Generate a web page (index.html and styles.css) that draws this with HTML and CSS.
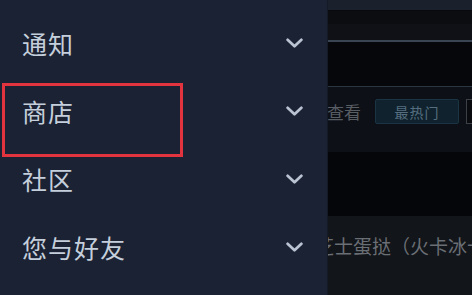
FILE: index.html
```html
<!DOCTYPE html>
<html lang="zh">
<head>
<meta charset="utf-8">
<link rel="stylesheet" href="styles.css">
</head>
<body>
<div class="screen">
  <nav class="drawer">
    <div class="item"><span class="label">通知</span><svg class="chev" viewBox="0 0 16 9"><path d="M1.5 1.5 L8 7.5 L14.5 1.5"/></svg></div>
    <div class="item"><span class="label">商店</span><svg class="chev" viewBox="0 0 16 9"><path d="M1.5 1.5 L8 7.5 L14.5 1.5"/></svg></div>
    <div class="item"><span class="label">社区</span><svg class="chev" viewBox="0 0 16 9"><path d="M1.5 1.5 L8 7.5 L14.5 1.5"/></svg></div>
    <div class="item"><span class="label">您与好友</span><svg class="chev" viewBox="0 0 16 9"><path d="M1.5 1.5 L8 7.5 L14.5 1.5"/></svg></div>
    <div class="highlight"></div>
  </nav>
  <main class="page">
    <div class="topbar"></div>
    <div class="sep-dark"></div>
    <div class="band-a"></div>
    <div class="band-b"></div>
    <div class="sep-light"></div>
    <div class="hero"></div>
    <div class="sep-mid"></div>
    <div class="filters">
      <span class="view">查看</span>
      <span class="btn">最热门</span>
      <span class="btn2"></span>
    </div>
    <div class="shade"></div>
    <div class="listing">
      <span class="title">芝士蛋挞（火卡冰卡</span>
    </div>
  </main>
</div>
</body>
</html>
```

FILE: styles.css
```css
* { box-sizing: border-box; }
html, body { margin: 0; padding: 0; }
body {
  width: 472px;
  height: 295px;
  overflow: hidden;
  background: #0d1016;
  font-family: "Noto Sans CJK SC", "Noto Sans", sans-serif;
}
.screen {
  display: flex;
  width: 472px;
  height: 295px;
}
.drawer {
  position: relative;
  width: 328px;
  flex: none;
  background: #1b2233;
  padding-top: 9px;
  border-right: 1px solid #141a26;
}
.item {
  height: 68px;
  display: flex;
  align-items: center;
  justify-content: space-between;
  padding-left: 22px;
  padding-right: 24px;
}
.label {
  font-size: 25px;
  color: #c5cfdc;
  letter-spacing: 1px;
  line-height: 1;
}
.chev {
  width: 17px;
  height: 10px;
  fill: none;
  stroke: #b9c3d1;
  stroke-width: 2.6;
  stroke-linecap: round;
  stroke-linejoin: round;
}
.highlight {
  position: absolute;
  left: 2px;
  top: 83px;
  width: 181px;
  height: 74px;
  border: 3px solid #e1343e;
}
.page {
  flex: 1;
  display: flex;
  flex-direction: column;
  overflow: hidden;
  background: #121519;
}
.topbar { height: 10px; background: #1a202c; }
.sep-dark { height: 1px; background: #08090c; }
.band-a { height: 13px; background: #0b0d11; }
.band-b { height: 16px; background: #0f1116; }
.sep-light { height: 2px; background: #3a4553; }
.hero { height: 44px; background: #06070a; }
.sep-mid { height: 1px; background: #2c3641; }
.filters {
  height: 65px;
  background: #0d1016;
  display: flex;
  align-items: center;
  gap: 14px;
  padding-bottom: 16px;
  white-space: nowrap;
}
.view {
  font-size: 17px;
  color: #585d64;
  margin-left: -1px;
}
.btn {
  flex: none;
  width: 84px;
  height: 25px;
  border: 1px solid #1b3444;
  border-radius: 2px;
  background: #10222d;
  color: #566f80;
  font-size: 14px;
  display: flex;
  align-items: center;
  justify-content: center;
  letter-spacing: 1px;
}
.btn2 {
  flex: none;
  width: 30px;
  height: 25px;
  border: 1px solid #3c4148;
  background: #0a0b0e;
  margin-left: -7px;
}
.shade { height: 64px; background: #04060a; }
.listing {
  flex: 1;
  background: #121519;
  padding-top: 16px;
  white-space: nowrap;
}
.title {
  display: block;
  margin-left: -13px;
  font-size: 19px;
  color: #6a6e75;
}
```
